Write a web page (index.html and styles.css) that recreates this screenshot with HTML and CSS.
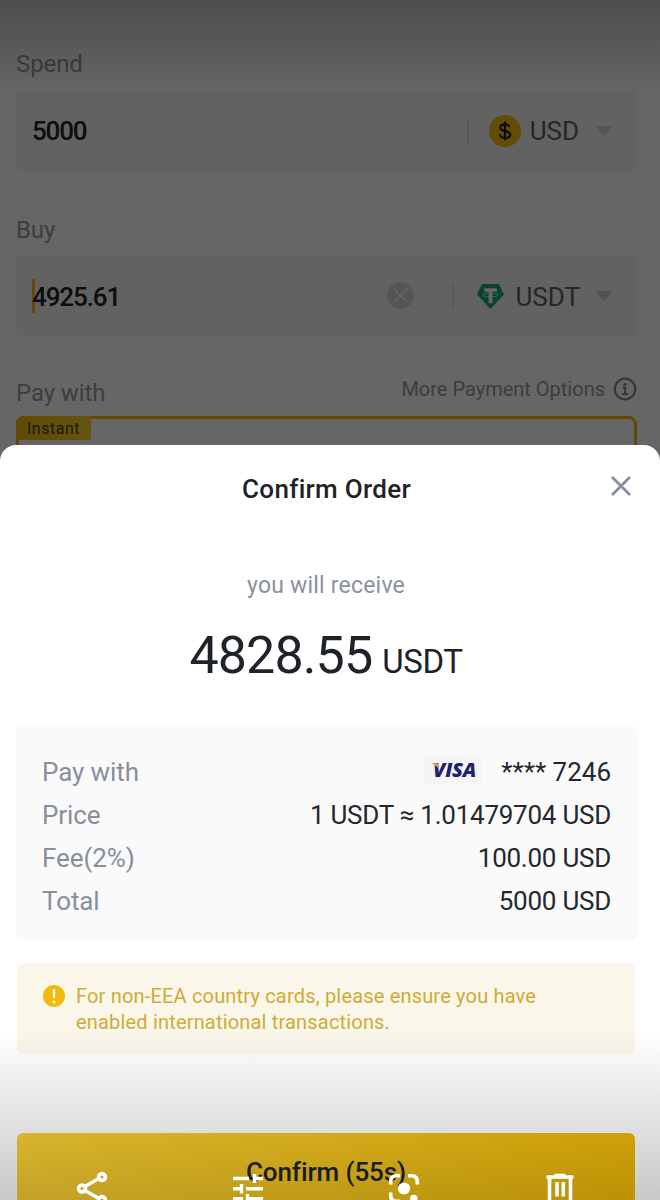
FILE: index.html
```html
<!DOCTYPE html>
<html lang="en">
<head>
    <meta charset="UTF-8">
    <meta name="viewport" content="width=device-width, initial-scale=1.0">
    <title>Confirm Order</title>
    <link rel="stylesheet" href="styles.css">
</head>
<body>
    <div class="screen">
        <!-- Buy form behind the sheet -->
        <div class="form">
            <div class="label-row"><span class="label">Spend</span></div>
            <div class="field">
                <span class="value">5000</span>
                <span class="divider"></span>
                <svg class="coin" width="32" height="32" viewBox="0 0 32 32">
                    <circle cx="16" cy="16" r="16" fill="#f8c00c"/>
                    <path d="M20.8 12.2c-.6-1.7-2.3-2.8-4.8-2.8-2.900 0-4.700 1.300-4.700 3.300 0 4.800 9.900 2 9.900 7 0 2-2 3.200-5 3.200-2.900 0-4.900-1.300-5.300-3.500M16 6.600v18.800" fill="none" stroke="#1e2026" stroke-width="2.200"/>
                </svg>
                <span class="currency">USD</span>
                <svg class="caret" width="18" height="12" viewBox="0 0 18 12"><path d="M2 1h14q1.500 0 .6 1.600L10.300 10q-1.300 1.400-2.600 0L1.400 2.600Q.5 1 2 1z" fill="#d2d7d8"/></svg>
            </div>

            <div class="label-row label-buy"><span class="label">Buy</span></div>
            <div class="field">
                <span class="cursor"></span>
                <span class="value value-buy">4925.61</span>
                <svg class="clear" width="27" height="27" viewBox="0 0 27 27">
                    <circle cx="13.500" cy="13.500" r="13.500" fill="#d2d5d9"/>
                    <path d="M6.500 6.500l14 14M20.500 6.500l-14 14" stroke="#f5f5f5" stroke-width="1.800"/>
                </svg>
                <span class="divider divider-buy"></span>
                <svg class="tether" width="27" height="25" viewBox="0 0 27 25">
                    <path d="M5 0h17l5 10.500L13.500 25 0 10.500z" fill="#1ba27a"/>
                    <path d="M7.200 4.200h12.600v3.600h-4.400v11.400h-3.800V7.800H7.200z" fill="#fff"/>
                    <ellipse cx="13.500" cy="11" rx="8" ry="1.700" fill="none" stroke="#fff" stroke-width=".7"/>
                </svg>
                <span class="currency">USDT</span>
                <svg class="caret" width="18" height="12" viewBox="0 0 18 12"><path d="M2 1h14q1.500 0 .6 1.600L10.300 10q-1.300 1.400-2.600 0L1.400 2.600Q.5 1 2 1z" fill="#cdd0d6"/></svg>
            </div>

            <div class="label-row label-pay">
                <span class="label">Pay with</span>
                <span class="more">More Payment Options
                    <svg width="24" height="24" viewBox="0 0 24 24">
                        <circle cx="12" cy="12" r="10.300" fill="none" stroke="#858a92" stroke-width="2.200"/>
                        <path d="M9.500 10.500h2.600v6M9 16.900h6.200" fill="none" stroke="#858a92" stroke-width="2"/>
                        <circle cx="12" cy="7.200" r="1.500" fill="#858a92"/>
                    </svg>
                </span>
            </div>
            <div class="pay-card"><span class="instant">Instant</span></div>
        </div>
        <div class="dim"></div>
        <div class="top-shade"></div>

        <!-- Confirm sheet -->
        <div class="sheet">
            <div class="sheet-header">
                <h1>Confirm Order</h1>
                <svg class="close" width="20" height="20" viewBox="0 0 20 20"><path d="M1 1l18 18M19 1L1 19" stroke="#848e9c" stroke-width="2.800"/></svg>
            </div>
            <p class="receive">you will receive</p>
            <div class="amount">4828.55<span class="unit">USDT</span></div>

            <div class="details">
                <div class="row">
                    <span class="name">Pay with</span>
                    <span class="data card">
                        <span class="visa">
                            <svg width="58" height="28" viewBox="0 0 58 28">
                                <text x="9" y="21" textLength="43" lengthAdjust="spacingAndGlyphs">VISA</text>
                                <path d="M7 7h5q2 0 2.300 1.800l.7 4.200Q11.500 9 7 7z" fill="#e9a33c"/>
                            </svg>
                        </span>
                        <span class="digits">**** 7246</span>
                    </span>
                </div>
                <div class="row"><span class="name">Price</span><span class="data">1 USDT ≈ 1.01479704 USD</span></div>
                <div class="row"><span class="name">Fee(2%)</span><span class="data">100.00 USD</span></div>
                <div class="row"><span class="name">Total</span><span class="data">5000 USD</span></div>
            </div>

            <div class="notice">
                <svg width="22" height="22" viewBox="0 0 22 22">
                    <circle cx="11" cy="11" r="11" fill="#f0b90b"/>
                    <path d="M11 4v9" stroke="#fbf6e8" stroke-width="2.400"/>
                    <circle cx="11" cy="17" r="1.500" fill="#fbf6e8"/>
                </svg>
                <p>For non-EEA country cards, please ensure you have<br>enabled international transactions.</p>
            </div>

            <button class="confirm">Confirm (55s)</button>
        </div>

        <!-- Gallery toolbar -->
        <div class="bottom-shade"></div>
        <div class="toolbar">
            <svg width="32" height="42" viewBox="0 0 32 42" fill="none" stroke="#fff" stroke-width="3.600">
                <path d="M9 15.500l12.500-7.300M9 19.500l12.500 7.300"/>
                <circle cx="26" cy="6" r="3.400"/>
                <circle cx="6" cy="17.500" r="3.400"/>
                <circle cx="26" cy="29" r="3.400"/>
            </svg>
            <svg width="32" height="42" viewBox="0 0 32 42" fill="none" stroke="#fff" stroke-width="3.400">
                <path d="M1 7.500h16M21 7.500h10M22.500 3v9M1 17.700h8M9.500 13v9.500M14 17.700h17M1 27.800h10M15.500 23v9.500M16 27.800h15"/>
            </svg>
            <svg width="32" height="42" viewBox="0 0 32 42" fill="none" stroke="#fff" stroke-width="3.600">
                <path d="M2.700 13.500v-3Q2.700 4.700 8.500 4.700h3.700M20 4.700h3.500q5.800 0 5.800 5.800v3M2.700 21.500v3q0 5.800 5.800 5.800h4"/>
                <circle cx="16" cy="17.500" r="6.100" fill="#fff" stroke="none"/>
                <circle cx="25.800" cy="27.500" r="3.700" fill="#fff" stroke="none"/>
            </svg>
            <svg width="32" height="42" viewBox="0 0 32 42" fill="none" stroke="#fff" stroke-width="3.600">
                <path d="M2.500 6h27M10.500 4.500h11M5.500 7v24h21V7M13 11v14.500M19.300 11v14.500"/>
            </svg>
        </div>
    </div>
</body>
</html>
```
FILE: styles.css
```css
* {
    box-sizing: border-box;
}
body {
    margin: 0;
    font-family: Roboto, "Liberation Sans", sans-serif;
    background-color: #fff;
}
svg {
    display: block;
    flex: none;
}
.screen {
    position: relative;
    width: 660px;
    height: 1200px;
    overflow: hidden;
}

/* form */
.form {
    padding: 48px 23px 0 16px;
}
.label-row {
    display: flex;
    justify-content: space-between;
    height: 32px;
    line-height: 32px;
    margin-bottom: 10px;
}
.label-buy {
    margin: 43px 0 9px;
}
.label-pay {
    margin: 41px 0 7px;
}
.label {
    font-size: 24px;
    letter-spacing: -0.1px;
    color: #949ba6;
}
.more {
    display: flex;
    align-items: center;
    gap: 8px;
    height: 24px;
    font-size: 20px;
    color: #949ba6;
}
.field {
    display: flex;
    align-items: center;
    height: 81px;
    padding: 0 24px 0 16px;
    background-color: #f5f5f5;
    border-radius: 5px;
}
.value {
    flex: 1;
    font-size: 26px;
    font-weight: 500;
    letter-spacing: -1.2px;
    color: #1e2329;
}
.value-buy {
    padding-top: 2px;
    letter-spacing: -1.1px;
}
.cursor {
    width: 3px;
    height: 34px;
    margin-right: -3px;
    background-color: #f0b90b;
}
.divider {
    width: 2px;
    height: 26px;
    margin-right: 20px;
    background-color: #dcdee1;
}
.divider-buy {
    margin: 0 23px 0 38px;
}
.currency {
    margin: 0 16px 0 9px;
    font-size: 26px;
    color: #5c6169;
}
.tether {
    margin-top: 2px;
}
.tether + .currency {
    margin-left: 11px;
    margin-right: 15px;
    padding-top: 2px;
}
.pay-card {
    height: 100px;
    border: 3px solid #f0b90b;
    border-radius: 8px;
}
.instant {
    display: block;
    width: 75px;
    height: 24px;
    margin: -3px 0 0 -3px;
    padding-left: 11px;
    line-height: 26px;
    font-size: 16px;
    letter-spacing: 0.5px;
    color: #474012;
    background: linear-gradient(90deg, #f0b90b, #f8d12f);
    border-radius: 7px 2px 2px 0;
}
.dim {
    position: absolute;
    inset: 0;
    background-color: rgba(0, 0, 0, 0.6);
}
.top-shade {
    position: absolute;
    top: 0;
    left: 0;
    right: 0;
    height: 92px;
    background: linear-gradient(rgba(0, 0, 0, 0.25), rgba(0, 0, 0, 0));
}

/* sheet */
.sheet {
    position: absolute;
    top: 445px;
    left: 0;
    right: 0;
    height: 780px;
    padding: 0 24px 0 16px;
    background-color: #fff;
    border-radius: 16px 16px 0 0;
}
.sheet-header {
    display: flex;
    align-items: center;
    height: 87px;
    padding-right: 5px;
}
h1 {
    flex: 1;
    margin: 0 -26px 0 0;
    text-align: center;
    font-size: 26px;
    font-weight: 500;
    letter-spacing: 0.3px;
    color: #1e2329;
}
.close {
    margin-bottom: 5px;
}
.receive {
    margin: 38px 0 0;
    line-height: 32px;
    text-align: center;
    font-size: 23px;
    letter-spacing: 0.2px;
    color: #8a929e;
}
.amount {
    height: 80px;
    margin-top: 14px;
    line-height: 80px;
    text-align: center;
    font-size: 52px;
    letter-spacing: -0.9px;
    color: #1e2329;
}
.unit {
    margin-left: 10px;
    font-size: 33px;
    letter-spacing: -0.4px;
}
.details {
    height: 216px;
    margin: 29px -1px 0 0;
    padding: 26px 26px 0 26px;
    background-color: #fafafa;
    border-radius: 6px;
}
.row {
    display: flex;
    justify-content: space-between;
    height: 43px;
    line-height: 43px;
    font-size: 26px;
}
.name {
    letter-spacing: -0.1px;
    color: #878f9c;
}
.data {
    letter-spacing: -0.25px;
    color: #23282f;
}
.card {
    display: flex;
    align-items: center;
    gap: 19px;
}
.digits {
    letter-spacing: 0;
}
.visa {
    width: 58px;
    height: 28px;
    margin-bottom: 5px;
    background-color: #f5f5f5;
}
.visa text {
    font-family: "Open Sans", sans-serif;
    font-size: 19px;
    font-weight: 800;
    font-style: italic;
    fill: #21226e;
}
.notice {
    display: flex;
    gap: 11px;
    height: 91px;
    margin: 22px 1px 0;
    padding: 20px 26px;
    background-color: #faf6e9;
    border-radius: 6px;
}
.notice svg {
    margin-top: 2px;
}
.notice p {
    margin: 0;
    line-height: 26px;
    font-size: 20px;
    letter-spacing: 0.18px;
    color: #cfab38;
    white-space: nowrap;
}
.confirm {
    display: block;
    width: 618px;
    height: 80px;
    margin: 79px 0 0 1px;
    padding: 0 0 2px;
    border: none;
    border-radius: 6px;
    background: linear-gradient(90deg, #f8d033, #eeb908);
    font-family: inherit;
    font-size: 26px;
    font-weight: 500;
    letter-spacing: -0.1px;
    color: #1e2329;
}

/* gallery overlay */
.bottom-shade {
    position: absolute;
    top: 1030px;
    left: 0;
    right: 0;
    bottom: 0;
    background: linear-gradient(rgba(0, 0, 0, 0), rgba(0, 0, 0, 0.215));
}
.toolbar {
    position: absolute;
    top: 1171px;
    left: 76px;
    right: 84px;
    display: flex;
    justify-content: space-between;
}
```
